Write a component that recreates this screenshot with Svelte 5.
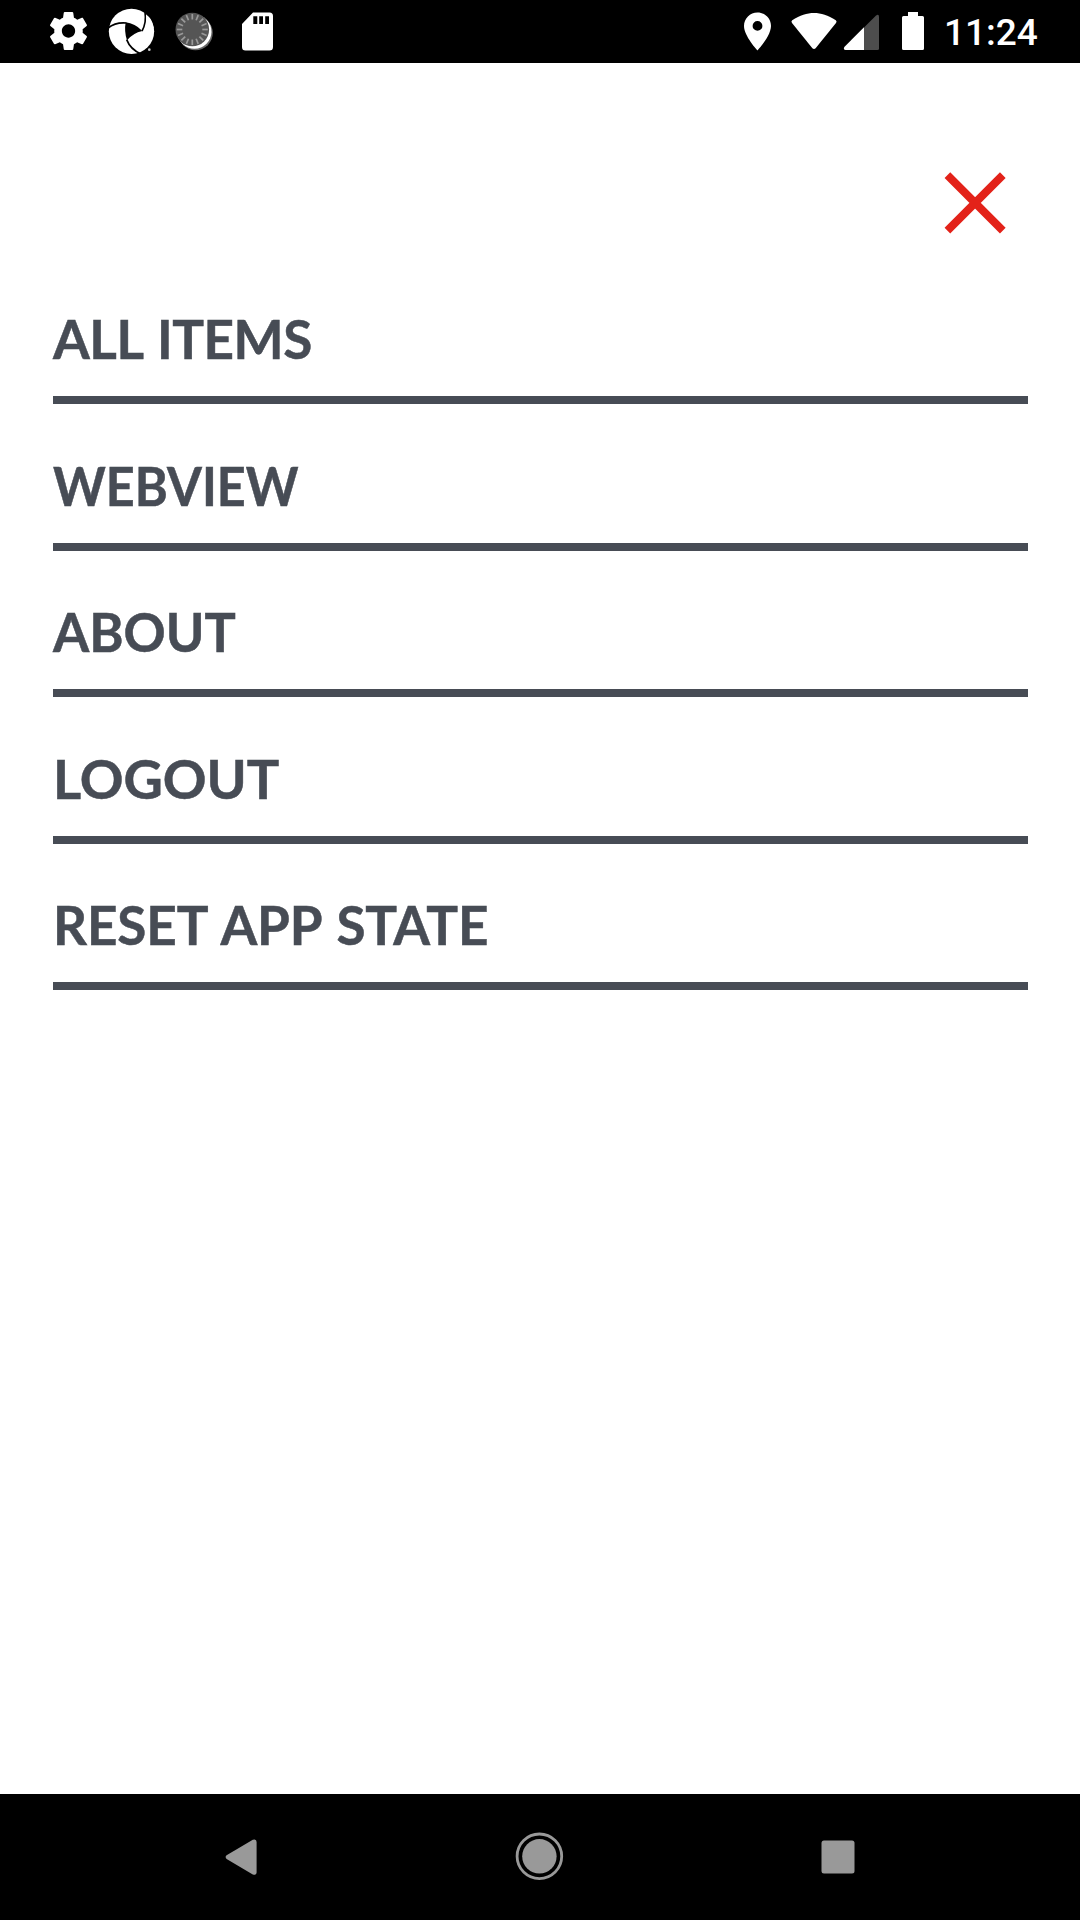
<script>
  const items = [
    { label: 'ALL ITEMS', spacing: -0.45, scale: 1 },
    { label: 'WEBVIEW', spacing: 0, scale: 0.948 },
    { label: 'ABOUT', spacing: 0, scale: 0.984 },
    { label: 'LOGOUT', spacing: 0, scale: 1.022 },
    { label: 'RESET APP STATE', spacing: -0.1, scale: 1 }
  ];
  const ticks = Array.from({ length: 16 }, (_, i) => i * 22.5);
</script>

<div class="screen">
  <header class="status">
    <div class="group">
      <svg width="50" height="63" viewBox="44 0 50 63">
        <path transform="translate(45.7 8.2) scale(1.9)" fill="#fff" d="M19.43 12.98c.04-.32.07-.64.07-.98s-.03-.66-.07-.98l2.11-1.65c.19-.15.24-.42.12-.64l-2-3.46c-.12-.22-.39-.3-.61-.22l-2.49 1c-.52-.4-1.08-.73-1.69-.98l-.38-2.65C14.46 2.18 14.25 2 14 2h-4c-.25 0-.46.18-.49.42l-.38 2.65c-.61.25-1.17.59-1.69.98l-2.49-1c-.23-.09-.49 0-.61.22l-2 3.46c-.13.22-.07.49.12.64l2.11 1.65c-.04.32-.07.65-.07.98s.03.66.07.98l-2.11 1.65c-.19.15-.24.42-.12.64l2 3.46c.12.22.39.3.61.22l2.49-1c.52.4 1.08.73 1.69.98l.38 2.65c.03.24.24.42.49.42h4c.25 0 .46-.18.49-.42l.38-2.65c.61-.25 1.17-.59 1.69-.98l2.49 1c.23.09.49 0 .61-.22l2-3.46c.12-.22.07-.49-.12-.64l-2.11-1.65zM12 15.5c-1.93 0-3.5-1.57-3.5-3.5s1.57-3.5 3.5-3.5 3.5 1.57 3.5 3.5-1.57 3.5-3.5 3.5z" />
      </svg>
      <svg width="70" height="63" viewBox="94 0 70 63">
        <g transform="translate(40 0) scale(.33333)">
          <circle cx="274.5" cy="94" r="68" fill="#fff" />
          <path d="M257 67Q285 70 307 93Q279 99 261 121Q252 95 257 67Z" fill="#000" />
          <g fill="none" stroke="#000" stroke-width="5">
            <path d="M204 84Q227 66 259 69" />
            <path d="M315 36Q320 68 306 93" />
            <path d="M260 119Q271 148 303 162" />
          </g>
          <path d="M310 20L318 45L345 60L350 20Z" fill="#000" />
          <path d="M318 43Q337 60 341 85L320 85Z" fill="#fff" />
          <circle cx="328" cy="149" r="4" fill="#ccc" />
        </g>
      </svg>
      <svg width="64" height="63" viewBox="164 0 64 63">
        <circle cx="195.5" cy="33" r="17.3" fill="#666" />
        <circle cx="194.5" cy="31.8" r="17" fill="#fff" />
        <circle cx="192.3" cy="29.5" r="16.8" fill="#555" />
        {#each ticks as angle}
          <path d="M192.3 14V19.5" transform="rotate({angle} 192.3 29.5)" stroke="#999" stroke-width="1.7" />
        {/each}
      </svg>
      <svg width="56" height="63" viewBox="228 0 56 63">
        <path fill="#fff" fill-rule="evenodd" d="M253 12.5H269.5Q273 12.5 273 16V47Q273 50.5 269.5 50.5H245.5Q242 50.5 242 47V24ZM253.3 16.3V24H257.3V16.3ZM259.2 16.3V24H263V16.3ZM265.2 16.3V24H269V16.3Z" />
      </svg>
    </div>
    <div class="group">
      <svg width="44" height="63" viewBox="736 0 44 63">
        <path fill="#fff" fill-rule="evenodd" d="M757.5 12.5C750 12.5 744 18.5 744 26C744 36 757.5 50.5 757.5 50.5S771 36 771 26C771 18.5 765 12.5 757.5 12.5ZM757.5 21A4.9 4.9 0 1 1 757.5 30.8A4.9 4.9 0 1 1 757.5 21Z" />
      </svg>
      <svg width="60" height="63" viewBox="780 0 60 63">
        <path fill="#fff" d="M792.2 20.2C800 15.3 807 13 814 13S828 15.3 835.8 20.2Q837.2 21.5 836 23L815.6 48.2Q814 49.8 812.4 48.2L792 23Q790.8 21.5 792.2 20.2Z" />
      </svg>
      <svg width="50" height="63" viewBox="840 0 50 63">
        <path fill="#4d4d4d" d="M864 27.5L875.8 15.7Q879 13.5 879 17V48.5Q879 50 877.5 50H864Z" />
        <path fill="#fff" d="M864 27.3V50H845.5Q843 49.5 844.3 47Z" />
      </svg>
      <svg width="54" height="63" viewBox="890 0 54 63">
        <path fill="#fff" d="M908 12H918V16H922.5Q924 16 924 17.5V48.5Q924 50 922.5 50H903.5Q902 50 902 48.5V17.5Q902 16 903.5 16H908Z" />
      </svg>
      <span class="time">11:24</span>
    </div>
  </header>

  <main>
    <div class="close-row">
      <svg width="70" height="70" viewBox="940 168 70 70" role="img" aria-label="Close">
        <path d="M947.4 175.2L1002.8 230.6M1002.8 175.2L947.4 230.6" stroke="#e32219" stroke-width="8" />
      </svg>
    </div>
    <nav>
      {#each items as item}
        <div class="item"><span style="letter-spacing: {item.spacing}px; transform: scaleX({item.scale})">{item.label}</span></div>
      {/each}
    </nav>
  </main>

  <footer>
    <svg width="60" height="60" viewBox="210 1827 60 60">
      <path fill="#999" d="M226.6 1855.3L252.8 1839.7Q256.6 1838.5 256.6 1842V1872Q256.6 1875.7 252.8 1874.4L226.6 1859Q224.6 1857 226.6 1855.3Z" />
    </svg>
    <svg width="60" height="60" viewBox="509 1827 60 60">
      <circle cx="539.4" cy="1856.3" r="17.2" fill="#999" />
      <circle cx="539.4" cy="1856.3" r="22.3" fill="none" stroke="#999" stroke-width="2.8" />
    </svg>
    <svg width="60" height="60" viewBox="808 1827 60 60">
      <rect x="821.5" y="1840.5" width="33" height="33" rx="2.5" fill="#999" />
    </svg>
  </footer>
</div>

<style>
  :global(body) { margin: 0; background: #fff; }
  .screen { width: 1080px; height: 1920px; display: flex; flex-direction: column; background: #fff; }
  svg { display: block; flex: none; }
  .status { height: 63px; box-sizing: border-box; padding: 0 42px 0 44px; background: #000; display: flex; justify-content: space-between; }
  .group { display: flex; }
  .time { width: 94px; font: 500 37px/66px Roboto, sans-serif; color: #fff; white-space: nowrap; }
  main { flex: 1; padding: 105px 52px 0 53px; }
  .close-row { display: flex; justify-content: flex-end; padding-right: 18px; height: 89.5px; }
  .item { height: 146.5px; box-sizing: border-box; border-bottom: 8px solid #474c55; display: flex; align-items: flex-end; padding-bottom: 27px; }
  .item span { font: 700 53px/60px Lato, sans-serif; color: #474c55; white-space: pre; word-spacing: 2.6px; transform-origin: left; -webkit-text-stroke: 0.5px #474c55; }
  footer { height: 126px; box-sizing: border-box; padding: 33px 212px 0 210px; background: #000; display: flex; justify-content: space-between; }
</style>
